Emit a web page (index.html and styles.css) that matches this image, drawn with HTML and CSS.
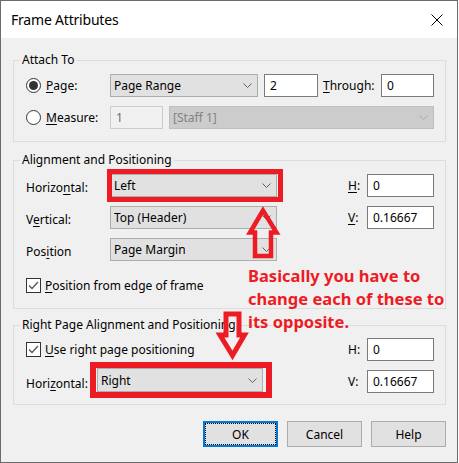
FILE: index.html
```html
<!DOCTYPE html>
<html>
<head>
<meta charset="utf-8">
<title>Frame Attributes</title>
<link rel="stylesheet" href="styles.css">
</head>
<body>
<div class="window">
  <div class="titlebar">
    <span class="title">Frame Attributes</span>
    <svg class="close" width="12" height="12" viewBox="0 0 12 12"><path d="M0.5 0.5L11.5 11.5M11.5 0.5L0.5 11.5" stroke="#000" stroke-width="1" fill="none"/></svg>
  </div>
  <div class="content">
    <section class="group g1">
      <div class="group-title">Attach To</div>
      <div class="g1-rows">
        <div class="row">
          <label class="opt"><span class="radio on"></span><span><u>P</u>age:</span></label>
          <div class="combo w-range"><span>Page Range</span><svg class="chev" width="9" height="5" viewBox="0 0 9 5"><path d="M0.5 0.5L4.5 4.5L8.5 0.5" fill="none" stroke="currentColor"/></svg></div>
          <div class="edit w-from">2</div>
          <span class="through"><u>T</u>hrough:</span>
          <div class="edit w-to">0</div>
        </div>
        <div class="row">
          <label class="opt"><span class="radio"></span><span><u>M</u>easure:</span></label>
          <div class="edit disabled w-measure">1</div>
          <div class="combo disabled w-staff"><span>[Staff 1]</span><svg class="chev" width="9" height="5" viewBox="0 0 9 5"><path d="M0.5 0.5L4.5 4.5L8.5 0.5" fill="none" stroke="currentColor"/></svg></div>
        </div>
      </div>
    </section>

    <section class="group g2">
      <div class="group-title">Alignment and Positioning</div>
      <div class="g2-grid">
        <span class="lbl">Horizo<u>n</u>tal:</span>
        <div class="combo"><span>Left</span><svg class="chev" width="9" height="5" viewBox="0 0 9 5"><path d="M0.5 0.5L4.5 4.5L8.5 0.5" fill="none" stroke="currentColor"/></svg></div>
        <span class="hl"><u>H</u>:</span>
        <div class="edit">0</div>

        <span class="lbl">V<u>e</u>rtical:</span>
        <div class="combo"><span>Top (Header)</span><svg class="chev" width="9" height="5" viewBox="0 0 9 5"><path d="M0.5 0.5L4.5 4.5L8.5 0.5" fill="none" stroke="currentColor"/></svg></div>
        <span class="hl"><u>V</u>:</span>
        <div class="edit">0.16667</div>

        <span class="lbl">Pos<u>i</u>tion</span>
        <div class="combo"><span>Page Margin</span><svg class="chev" width="9" height="5" viewBox="0 0 9 5"><path d="M0.5 0.5L4.5 4.5L8.5 0.5" fill="none" stroke="currentColor"/></svg></div>

        <label class="chk-row"><span class="check"><svg width="13" height="13" viewBox="0 0 13 13"><path d="M2 6.5L5 9.5L11 3" fill="none" stroke="#5a5a5a" stroke-width="1.3"/></svg></span><span><u>P</u>osition from edge of frame</span></label>
      </div>
    </section>

    <section class="group g3">
      <div class="group-title">Right Page Alignment and Positioning</div>
      <div class="g3-grid">
        <label class="chk-row"><span class="check"><svg width="13" height="13" viewBox="0 0 13 13"><path d="M2 6.5L5 9.5L11 3" fill="none" stroke="#5a5a5a" stroke-width="1.3"/></svg></span><span><u>U</u>se right page positioning</span></label>
        <span class="hl">H:</span>
        <div class="edit">0</div>

        <span class="lbl">Hori<u>z</u>ontal:</span>
        <div class="combo up"><span>Right</span><svg class="chev" width="9" height="5" viewBox="0 0 9 5"><path d="M0.5 0.5L4.5 4.5L8.5 0.5" fill="none" stroke="currentColor"/></svg></div>
        <span class="hl">V:</span>
        <div class="edit">0.16667</div>
      </div>
    </section>

    <div class="buttons">
      <div class="btn default">OK</div>
      <div class="btn">Cancel</div>
      <div class="btn">Help</div>
    </div>
  </div>
</div>

<div class="note">Basically you have to<br>change each of these to<br>its opposite.</div>
<div class="mark mark-h"></div>
<div class="mark mark-rh"></div>
<svg class="arrows" width="459" height="463" viewBox="0 0 459 463">
  <polygon points="263,210.5 250,232.5 255,232.5 255,256 271,256 271,232.5 276.5,232.5" fill="none" stroke="#ed1c24" stroke-width="4.5" stroke-linejoin="miter"/>
  <polygon points="226,314 239,314 239,335 244.5,335 232.5,355.5 220,335 226,335" fill="none" stroke="#ed1c24" stroke-width="5" stroke-linejoin="miter"/>
</svg>
</body>
</html>
```

FILE: styles.css
```css
* { box-sizing: border-box; }
html, body { margin: 0; padding: 0; }
body {
  position: relative;
  width: 459px;
  height: 463px;
  overflow: hidden;
  background: #ffffff;
  font-family: "Noto Sans", "Open Sans", sans-serif;
  font-size: 12px;
  color: #000;
}
u { text-decoration-thickness: 1px; text-underline-offset: 2px; }

.window {
  width: 458px;
  height: 463px;
  border: 1px solid #6b6b6b;
  background: #f0f0f0;
  display: flex;
  flex-direction: column;
}
.titlebar {
  flex: none;
  height: 37px;
  background: #fff;
  display: flex;
  align-items: center;
  justify-content: space-between;
  padding: 0 14px 0 10px;
}
.title { font-size: 14px; letter-spacing: -0.2px; }
.close { display: block; }

.content { padding: 22px 11px 0 12px; }

.group {
  border: 1px solid #dcdcdc;
  padding: 0 11px 12px 12px;
}
.group-title {
  width: max-content;
  margin: -9px 0 6px -6px;
  padding: 0 2px;
  line-height: 16px;
  background: #f0f0f0;
}
.g2 { margin-top: 18px; padding-bottom: 11px; }
.g3 { margin-top: 16px; padding-bottom: 11px; }
.g3 .group-title { margin-bottom: 5px; }

.g1-rows { display: flex; flex-direction: column; gap: 9px; }
.row { display: flex; align-items: center; height: 23px; }
.opt { width: 84px; flex: none; display: flex; align-items: center; gap: 5px; }

.radio {
  flex: none;
  width: 15px;
  height: 15px;
  border: 1px solid #333;
  border-radius: 50%;
  background: #fff;
  display: flex;
  align-items: center;
  justify-content: center;
}
.radio.on::after {
  content: "";
  width: 9px;
  height: 9px;
  border-radius: 50%;
  background: #333;
}
.check {
  flex: none;
  width: 15px;
  height: 15px;
  border: 1px solid #333;
  background: #fff;
  display: flex;
  align-items: center;
  justify-content: center;
}
.check svg { display: block; }

.combo {
  height: 23px;
  flex: none;
  display: flex;
  align-items: center;
  justify-content: space-between;
  padding: 0 5px 0 3px;
  background: #e1e1e1;
  border: 1px solid #adadad;
  white-space: nowrap;
}
.chev { flex: none; display: block; color: #606060; }
.combo.disabled { background: #cccccc; border-color: #bfbfbf; color: #838383; }
.combo.disabled .chev { color: #a8a8a8; }

.edit {
  height: 23px;
  flex: none;
  display: flex;
  align-items: center;
  padding-left: 5px;
  background: #fff;
  border: 1px solid #7a7a7a;
}
.edit.disabled { background: #f0f0f0; border-color: #cccccc; color: #6d6d6d; }

.w-range { width: 148px; }
.w-from { width: 54px; margin-left: 6px; }
.through { width: 63px; flex: none; padding-left: 5px; }
.w-to { width: 53px; }
.w-measure { width: 53px; }
.w-staff { width: 265px; margin-left: 6px; }

.g2-grid {
  display: grid;
  grid-template-columns: 84px 167px 1fr 19px 67px;
  grid-template-rows: 23px 23px 23px 27px;
  row-gap: 9px;
  align-items: center;
}
.g3-grid {
  display: grid;
  grid-template-columns: 71px 166px 1fr 19px 67px;
  grid-template-rows: 23px 23px;
  row-gap: 9px;
  align-items: center;
}
.lbl { padding-top: 3px; white-space: nowrap; }
.hl { grid-column: 4; }
.chk-row {
  grid-column: 1 / 4;
  display: flex;
  align-items: center;
  gap: 4px;
  height: 23px;
  white-space: nowrap;
}
.g2-grid .chk-row { grid-column: 1 / -1; align-self: end; }
.combo.up { align-self: start; margin-top: -2px; height: 24px; }

.buttons {
  display: flex;
  justify-content: flex-end;
  gap: 9px;
  margin-top: 16px;
}
.btn {
  width: 75px;
  height: 26px;
  display: flex;
  align-items: center;
  justify-content: center;
  background: #e1e1e1;
  border: 1px solid #adadad;
}
.btn.default {
  border: 2px solid #0078d7;
  outline: 1px dotted #000;
  outline-offset: -3px;
}

/* annotations drawn over the dialog */
.note {
  position: absolute;
  left: 248px;
  top: 264px;
  font-weight: 700;
  font-size: 16.5px;
  line-height: 23px;
  color: #ed1c24;
  white-space: nowrap;
}
.mark {
  position: absolute;
  border: 5px solid #ed1c24;
}
.mark-h { left: 107px; top: 169px; width: 176px; height: 33px; }
.mark-rh { left: 90px; top: 362px; width: 182px; height: 36px; border-width: 6px; }
.arrows { position: absolute; left: 0; top: 0; }
```
